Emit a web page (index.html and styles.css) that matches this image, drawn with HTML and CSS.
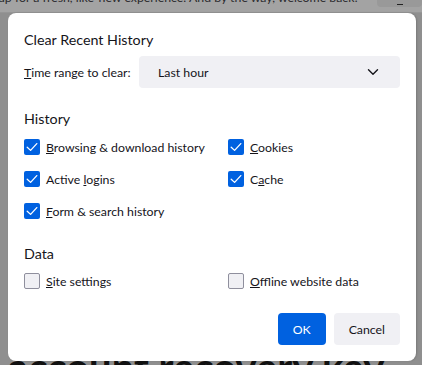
FILE: index.html
```html
<!DOCTYPE html>
<html>
<head>
<meta charset="utf-8">
<link rel="stylesheet" href="styles.css">
</head>
<body>
<div class="page">
  <div class="notice">
    <span class="notice-text">up for a fresh, like-new experience. And by the way, welcome back!</span>
    <span class="notice-btn"><span class="dash"></span></span>
  </div>
  <div class="page-body"></div>
  <div class="bottom-strip"><div class="big-text">account recovery key</div></div>
</div>

<div class="dialog">
  <h1 class="title">Clear Recent History</h1>
  <div class="range-row">
    <label class="range-label"><u>T</u>ime range to clear:</label>
    <div class="select">
      <span>Last hour</span>
      <svg class="chev" width="12" height="8" viewBox="0 0 12 8"><path d="M1.5 1.8 L6 6.2 L10.5 1.8" fill="none" stroke="#15141a" stroke-width="1.4" stroke-linecap="round" stroke-linejoin="round"/></svg>
    </div>
  </div>

  <h2 class="section">History</h2>
  <div class="grid">
    <label class="item"><span class="box checked"><svg viewBox="0 0 16 16" width="16" height="16"><path d="M3.2 8.2 L6.6 11.4 L12.8 4.6" fill="none" stroke="#fff" stroke-width="1.3" stroke-linecap="round" stroke-linejoin="round"/></svg></span><span><u>B</u>rowsing &amp; download history</span></label>
    <label class="item"><span class="box checked"><svg viewBox="0 0 16 16" width="16" height="16"><path d="M3.2 8.2 L6.6 11.4 L12.8 4.6" fill="none" stroke="#fff" stroke-width="1.3" stroke-linecap="round" stroke-linejoin="round"/></svg></span><span><u>C</u>ookies</span></label>
    <label class="item"><span class="box checked"><svg viewBox="0 0 16 16" width="16" height="16"><path d="M3.2 8.2 L6.6 11.4 L12.8 4.6" fill="none" stroke="#fff" stroke-width="1.3" stroke-linecap="round" stroke-linejoin="round"/></svg></span><span>Active <u>l</u>ogins</span></label>
    <label class="item"><span class="box checked"><svg viewBox="0 0 16 16" width="16" height="16"><path d="M3.2 8.2 L6.6 11.4 L12.8 4.6" fill="none" stroke="#fff" stroke-width="1.3" stroke-linecap="round" stroke-linejoin="round"/></svg></span><span>C<u>a</u>che</span></label>
    <label class="item"><span class="box checked"><svg viewBox="0 0 16 16" width="16" height="16"><path d="M3.2 8.2 L6.6 11.4 L12.8 4.6" fill="none" stroke="#fff" stroke-width="1.3" stroke-linecap="round" stroke-linejoin="round"/></svg></span><span><u>F</u>orm &amp; search history</span></label>
  </div>

  <h2 class="section data">Data</h2>
  <div class="grid data-grid">
    <label class="item"><span class="box"></span><span><u>S</u>ite settings</span></label>
    <label class="item"><span class="box"></span><span><u>O</u>ffline website data</span></label>
  </div>

  <div class="buttons">
    <button class="btn primary">OK</button>
    <button class="btn">Cancel</button>
  </div>
</div>
</body>
</html>
```

FILE: styles.css
```css
* { box-sizing: border-box; }
html, body {
  margin: 0;
  padding: 0;
  width: 422px;
  height: 365px;
  overflow: hidden;
  font-family: "Segoe UI", Lato, "Noto Sans", sans-serif;
  color: #15141a;
}
.page {
  width: 422px;
  height: 365px;
  background: #8f8f8f;
  display: flex;
  flex-direction: column;
  overflow: hidden;
}
.notice {
  height: 13px;
  flex: none;
  background: #a3a3a3;
  border-bottom: 1px solid #959595;
  display: flex;
  align-items: flex-end;
  justify-content: space-between;
  overflow: hidden;
}
.notice-text {
  font-size: 12.3px;
  line-height: 14px;
  color: #2a2a2e;
  white-space: nowrap;
  margin-left: -2px;
  margin-bottom: 7px;
}
.notice-btn {
  width: 45px;
  height: 21px;
  margin-bottom: 5px;
  background: #999999;
  border-radius: 4px;
  position: relative;
  flex: none;
}
.dash {
  position: absolute;
  left: 20px;
  bottom: 2px;
  width: 6px;
  height: 1px;
  background: #222;
}
.page-body { flex: 1; }
.bottom-strip {
  height: 4px;
  flex: none;
  overflow: hidden;
}
.big-text {
  margin: -14px 0 0 8px;
  font-size: 40px;
  font-weight: 700;
  line-height: 40px;
  color: #111;
  white-space: nowrap;
}
.dialog {
  position: absolute;
  z-index: 1;
  left: 8px;
  top: 13px;
  width: 408px;
  height: 348px;
  background: #fff;
  border-radius: 8px;
  box-shadow: 1px 0 2px rgba(0, 0, 0, 0.15);
  padding: 17px 16px 16px 16px;
  display: flex;
  flex-direction: column;
}
.title {
  margin: 0;
  font-size: 14.3px;
  font-weight: 400;
  line-height: 20px;
  height: 20px;
}
.range-row {
  display: flex;
  align-items: center;
  margin-top: 6px;
  font-size: 12.3px;
  height: 32px;
}
.range-label { width: 115px; flex: none; white-space: nowrap; }
.select {
  flex: 1;
  height: 32px;
  background: #f0f0f4;
  border-radius: 4px;
  display: flex;
  align-items: center;
  justify-content: space-between;
  padding: 0 21px 0 19px;
}
.chev { display: block; }
.section {
  margin: 21px 0 0 0;
  font-size: 14.3px;
  font-weight: 400;
  line-height: 20px;
}
.section.data { margin-top: 17px; }
.grid {
  display: grid;
  grid-template-columns: 204px 1fr;
  grid-auto-rows: 32px;
  margin-top: 2px;
  font-size: 12.3px;
}
.data-grid { margin-top: 1px; }
.item {
  display: flex;
  align-items: center;
  gap: 6px;
  white-space: nowrap;
}
.box {
  width: 16px;
  height: 16px;
  border-radius: 2px;
  border: 1px solid #8f8f9d;
  background: #f0f0f4;
  flex: none;
  display: flex;
}
.box.checked {
  border: none;
  background: #0061e0;
}
.box svg { display: block; }
.buttons {
  margin-top: auto;
  display: flex;
  justify-content: flex-end;
  gap: 8px;
}
.btn {
  height: 32px;
  border: none;
  border-radius: 4px;
  background: #f0f0f4;
  color: #15141a;
  font-family: inherit;
  font-size: 12.3px;
  padding: 0 15px;
  margin: 0;
}
.btn.primary {
  background: #0061e0;
  color: #fff;
  width: 48px;
  padding: 0;
}
```
